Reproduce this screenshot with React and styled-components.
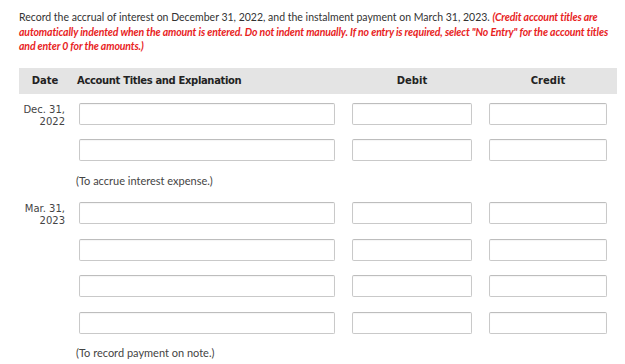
import React from "react";
import styled, { createGlobalStyle } from "styled-components";

const Global = createGlobalStyle`
  html, body { margin: 0; padding: 0; background: #fff; }
  body { font-family: Lato, "Open Sans", sans-serif; color: #333; }
`;

const Page = styled.div`
  width: 625px;
  height: 364px;
  overflow: hidden;
  padding: 10px 8px 0 19px;
  box-sizing: border-box;
`;

const Intro = styled.p`
  margin: 0;
  font-size: 10.5px;
  line-height: 14.5px;
  color: #333;
`;

const Note = styled.span`
  color: #e8231e;
  font-style: italic;
  font-weight: 700;
  letter-spacing: -0.13px;
`;

const COLS = "52px 8px 256px 17px 120px 17px 118px";

const Head = styled.div`
  margin-top: 14px;
  width: 598px;
  display: grid;
  grid-template-columns: ${COLS};
  align-items: center;
  height: 26px;
  background: #e4e4e4;
  font-family: "DejaVu Sans", Verdana, sans-serif;
  font-weight: 700;
  font-size: 10px;
  color: #222;
`;

const HeadCell = styled.div`
  grid-column: ${(p) => p.$col};
  text-align: ${(p) => p.$align || "center"};
  letter-spacing: ${(p) => p.$ls || 0}px;
  padding-left: ${(p) => p.$pl || 0}px;
  white-space: nowrap;
`;

const Body = styled.div`
  margin-top: 9px;
`;

const Row = styled.div`
  display: grid;
  grid-template-columns: ${COLS};
  height: 22px;
  margin-bottom: 14.7px;
`;

const DateCell = styled.div`
  grid-column: 1;
  font-family: "DejaVu Sans", Verdana, sans-serif;
  font-size: 10px;
  line-height: 12.5px;
  color: #444;
  text-align: right;
  padding-right: 6px;
  padding-top: 1px;
`;

const Input = styled.div`
  grid-column: ${(p) => p.$col};
  height: 22px;
  box-sizing: border-box;
  border: 1px solid #c9c9c9;
  border-top-color: #bdbdbd;
  border-radius: 2px;
  background: #fff;
  box-shadow: inset 0 1px 1px rgba(0, 0, 0, 0.04);
`;

const Explain = styled.div`
  font-size: 11px;
  line-height: 14px;
  color: #444;
  padding-left: 57px;
  margin-top: ${(p) => p.$mt}px;
  margin-bottom: ${(p) => p.$mb || 0}px;
`;

const Entry = ({ date, rows }) => (
  <>
    {Array.from({ length: rows }).map((_, i) => (
      <Row key={i}>
        <DateCell>{i === 0 ? date : null}</DateCell>
        <Input $col={3} />
        <Input $col={5} />
        <Input $col={7} />
      </Row>
    ))}
  </>
);

export default function App() {
  return (
    <Page>
      <Global />
      <Intro>
        Record the accrual of interest on December 31, 2022, and the instalment payment on March 31, 2023.{" "}
        <Note>
          (Credit account titles are automatically indented when the amount is entered. Do not indent manually. If no
          entry is required, select "No Entry" for the account titles and enter 0 for the amounts.)
        </Note>
      </Intro>
      <Head>
        <HeadCell $col={1}>Date</HeadCell>
        <HeadCell $col="2 / 4" $align="left" $ls={-0.35} $pl={6}>
          Account Titles and Explanation
        </HeadCell>
        <HeadCell $col={5}>Debit</HeadCell>
        <HeadCell $col={7}>Credit</HeadCell>
      </Head>
      <Body>
        <Entry
          date={
            <>
              Dec. 31,
              <br />
              2022
            </>
          }
          rows={2}
        />
        <Explain $mt={-2} $mb={14}>
          (To accrue interest expense.)
        </Explain>
        <Entry
          date={
            <>
              Mar. 31,
              <br />
              2023
            </>
          }
          rows={4}
        />
        <Explain $mt={-3}>(To record payment on note.)</Explain>
      </Body>
    </Page>
  );
}
